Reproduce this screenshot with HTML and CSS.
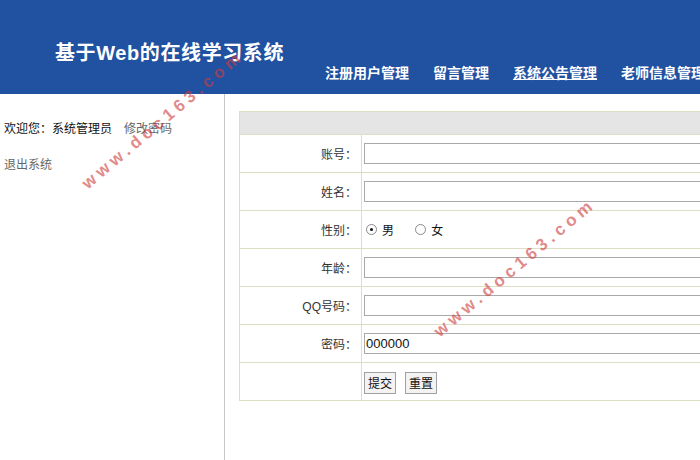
FILE: index.html
```html
<!DOCTYPE html>
<html lang="zh">
<head>
<meta charset="utf-8">
<title>基于Web的在线学习系统</title>
<link rel="stylesheet" href="styles.css">
</head>
<body>
<div class="page">
  <header class="top">
    <h1 class="title">基于Web的在线学习系统</h1>
    <nav class="nav">
      <a class="nav-item">注册用户管理</a>
      <a class="nav-item">留言管理</a>
      <a class="nav-item active">系统公告管理</a>
      <a class="nav-item">老师信息管理</a>
    </nav>
  </header>
  <div class="body">
    <aside class="side">
      <p class="welcome">欢迎您：系统管理员<a class="link">修改密码</a></p>
      <p class="logout"><a class="link">退出系统</a></p>
    </aside>
    <main class="main">
      <table class="form">
        <tr class="head"><td colspan="2"></td></tr>
        <tr><td class="lbl">账号：</td><td class="val"><input class="txt" type="text"></td></tr>
        <tr><td class="lbl">姓名：</td><td class="val"><input class="txt" type="text"></td></tr>
        <tr><td class="lbl">性别：</td><td class="val">
          <label class="radio"><span class="dot on"></span>男</label>
          <label class="radio"><span class="dot"></span>女</label>
        </td></tr>
        <tr><td class="lbl">年龄：</td><td class="val"><input class="txt" type="text"></td></tr>
        <tr><td class="lbl">QQ号码：</td><td class="val"><input class="txt" type="text"></td></tr>
        <tr><td class="lbl">密码：</td><td class="val"><input class="txt" type="text" value="000000"></td></tr>
        <tr><td class="lbl"></td><td class="val btns"><button class="btn">提交</button><button class="btn">重置</button></td></tr>
      </table>
    </main>
  </div>
  <div class="wm wm1">www.doc163.com</div>
  <div class="wm wm2">www.doc163.com</div>
</div>
</body>
</html>
```

FILE: styles.css
```css
* { box-sizing: border-box; }
html, body { margin: 0; padding: 0; }
body {
  font-family: "Liberation Sans", "Noto Sans CJK SC", sans-serif;
  font-size: 12px;
  color: #222;
  background: #fff;
}
.page {
  position: relative;
  width: 700px;
  height: 460px;
  overflow: hidden;
}
.top {
  height: 94px;
  background: #2151a1;
  position: relative;
}
.title {
  margin: 0;
  position: absolute;
  left: 55px;
  top: 38px;
  font-size: 20px;
  letter-spacing: 0.6px;
  line-height: 30px;
  font-weight: bold;
  color: #fff;
  white-space: nowrap;
}
.nav {
  position: absolute;
  left: 325px;
  top: 63px;
  display: flex;
  gap: 24px;
  white-space: nowrap;
}
.nav-item {
  color: #fff;
  font-size: 14px;
  font-weight: bold;
  line-height: 20px;
  text-decoration: none;
}
.nav-item.active { text-decoration: underline; }
.body {
  display: flex;
  height: 366px;
}
.side {
  width: 225px;
  flex: none;
  border-right: 1px solid #c8c8c8;
  padding: 27px 0 0 4px;
}
.side p { margin: 0; line-height: 16px; }
.welcome {
  color: #111;
  font-family: "Liberation Sans", "Noto Sans CJK TC", sans-serif;
}
.welcome .link { margin-left: 12px; }
.logout { margin-top: 20px !important; }
.link { color: #666; text-decoration: none; }
.main {
  flex: 1;
  padding: 17px 0 0 14px;
  overflow: hidden;
}
.form {
  border-collapse: collapse;
  width: 620px;
  border: 1px solid #dedec4;
}
.form td {
  border: 1px solid #dedec4;
  padding: 0;
  height: 38px;
}
.head td {
  height: 23px;
  background: #e5e5e5;
}
.lbl {
  width: 122px;
  text-align: right;
  padding-right: 4px !important;
  color: #333;
  font-family: "Liberation Sans", "Noto Sans CJK TC", sans-serif;
}
.val { padding-left: 2px !important; }
.txt {
  width: 480px;
  height: 21px;
  border: 1px solid #a9a9a9;
  margin: 0;
  padding: 0 1px;
  font-family: "Liberation Sans", sans-serif;
  font-size: 13px;
  color: #111;
  display: block;
}
.radio {
  display: inline-flex;
  align-items: center;
  margin-right: 16px;
  margin-left: 2px;
  font-size: 12px;
  color: #111;
}
.dot {
  width: 11px;
  height: 11px;
  border-radius: 50%;
  border: 1px solid #8a8a8a;
  background: #fff;
  margin-right: 5px;
  position: relative;
}
.dot.on::after {
  content: "";
  position: absolute;
  left: 3px;
  top: 3px;
  width: 3px;
  height: 3px;
  border-radius: 50%;
  background: #111;
}
.btns { padding-top: 8px !important; padding-bottom: 6px !important; }
.btns .btn + .btn { margin-left: 9px; }
.btn {
  height: 22px;
  padding: 0 3px;
  border: 1px solid #a0a0a0;
  background: #f5f2f2;
  font-family: "Noto Sans CJK SC", sans-serif;
  font-size: 12px;
  color: #111;
  border-radius: 0;
  vertical-align: top;
}
.wm {
  position: absolute;
  font-family: "Liberation Sans", sans-serif;
  font-weight: bold;
  font-size: 17px;
  letter-spacing: 4.5px;
  color: rgba(205, 60, 60, 0.62);
  white-space: nowrap;
  transform: translate(-50%, -50%) rotate(-40deg);
  pointer-events: none;
}
.wm1 { left: 163px; top: 120px; }
.wm2 { left: 515px; top: 268px; }
```
